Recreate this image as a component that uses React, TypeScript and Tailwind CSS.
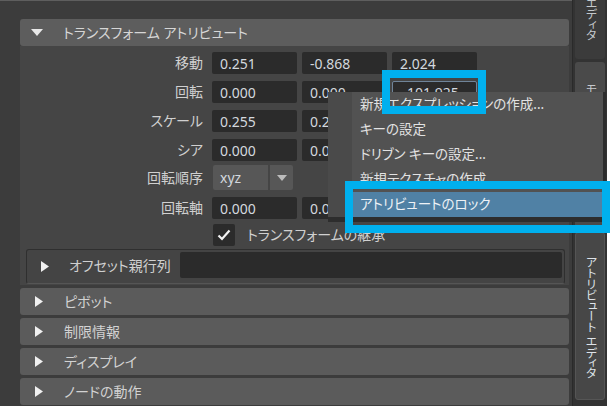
import React from "react";

function TriDown({ color = "#e8e8e8", w = 12, h = 7 }: { color?: string; w?: number; h?: number }) {
  return (
    <svg width={w} height={h} viewBox={`0 0 ${w} ${h}`} className="shrink-0">
      <polygon points={`0,0 ${w},0 ${w / 2},${h}`} fill={color} />
    </svg>
  );
}

function TriRight({ color = "#f0f0f0", w = 8, h = 11 }: { color?: string; w?: number; h?: number }) {
  return (
    <svg width={w} height={h} viewBox={`0 0 ${w} ${h}`} className="shrink-0">
      <polygon points={`0,0 ${w},${h / 2} 0,${h}`} fill={color} />
    </svg>
  );
}

function Field({ value, focus = false }: { value: string; focus?: boolean }) {
  return (
    <div
      className={
        focus
          ? "w-[85px] h-[22px] rounded-[2px] bg-[#2b2b2b] border border-[#6f8499] flex items-center pl-[14px] text-[14px] text-[#d3d8de]"
          : "w-[85px] h-[22px] rounded-[2px] bg-[#2b2b2b] flex items-center pl-[8px] text-[14px] text-[#d3d8de]"
      }
    >
      {value}
    </div>
  );
}

function Row({ label, values, mt, focusIdx = -1 }: { label: string; values: string[]; mt: string; focusIdx?: number }) {
  return (
    <div className={`flex items-center h-[22px] ${mt}`}>
      <div className="w-[183px] text-right text-[14px] text-[#d0d0d0] leading-none">{label}</div>
      <div className="flex gap-[5px] ml-[9px]">
        {values.map((v, i) => (
          <Field key={i} value={v} focus={i === focusIdx} />
        ))}
      </div>
    </div>
  );
}

function Collapsed({ label }: { label: string }) {
  return (
    <div className="h-[27px] mt-[3px] shrink-0 rounded-[3px] bg-[#5b5b5b] flex items-center pl-[15px]">
      <TriRight />
      <span className="ml-[21px] text-[14px] text-[#d2d2d2] leading-none">{label}</span>
    </div>
  );
}

export default function App() {
  return (
    <div className="relative w-[615px] h-[406px] overflow-hidden bg-white font-['Noto_Sans','Noto_Sans_CJK_JP',sans-serif] [font-feature-settings:'palt']">
      <div className="flex h-full">
        {/* main panel */}
        <div className="w-[572px] h-full bg-[#3c3c3c] border-t border-[#5e5e5e] pl-[20px] pr-[3px] pt-[18px] flex flex-col">
          <div className="h-[27px] shrink-0 rounded-[3px] bg-[#5d5d5d] flex items-center pl-[11px]">
            <TriDown />
            <span className="ml-[20px] text-[14px] text-[#d6d6d6] leading-none">トランスフォーム アトリビュート</span>
          </div>
          <div className="bg-[#454545] pt-[6px] pb-[1px] flex flex-col">
            <Row label="移動" values={["0.251", "-0.868", "2.024"]} mt="" />
            <Row label="回転" values={["0.000", "0.000", "101.925"]} mt="mt-[7px]" focusIdx={2} />
            <Row label="スケール" values={["0.255", "0.255", "0.255"]} mt="mt-[7px]" />
            <Row label="シア" values={["0.000", "0.000", "0.000"]} mt="mt-[7px]" />
            <div className="flex items-center h-[25px] mt-[4px]">
              <div className="w-[183px] text-right text-[14px] text-[#d0d0d0] leading-none">回転順序</div>
              <div className="flex ml-[10px] gap-[2px]">
                <div className="w-[55px] h-[25px] rounded-l-[2px] bg-[#575757] flex items-center pl-[7px] text-[14px] text-[#d3d8de]">xyz</div>
                <div className="w-[23px] h-[25px] rounded-r-[2px] bg-[#575757] flex items-center justify-center">
                  <TriDown color="#bcbcbc" w={10} h={6} />
                </div>
              </div>
            </div>
            <Row label="回転軸" values={["0.000", "0.000", "0.000"]} mt="mt-[7px]" />
            <div className="flex items-center h-[22px] mt-[5px]">
              <div className="w-[22px] h-[22px] ml-[193px] rounded-[2px] bg-[#2b2b2b] flex items-center justify-center">
                <svg width="14" height="12" viewBox="0 0 14 12">
                  <polyline points="1.5,6.5 5,10 12.5,1.5" fill="none" stroke="#f2f2f2" strokeWidth="2.2" />
                </svg>
              </div>
              <span className="ml-[12px] text-[14px] text-[#d0d0d0] leading-none">トランスフォームの継承</span>
            </div>
            <div className="mt-[3px] ml-[6px] mr-[4px] h-[35px] rounded-[3px] border border-[#2f2f2f] border-b-[#555555] bg-[#444444] flex items-start">
              <div className="h-[32px] flex items-center pl-[14px]">
                <TriRight />
                <span className="ml-[20px] text-[14px] text-[#d0d0d0] leading-none">オフセット親行列</span>
              </div>
              <div className="flex-1 h-[26px] mt-[2px] ml-[9px] mr-[2px] rounded-[2px] bg-[#2b2b2b]" />
            </div>
          </div>
          <Collapsed label="ピボット" />
          <Collapsed label="制限情報" />
          <Collapsed label="ディスプレイ" />
          <Collapsed label="ノードの動作" />
        </div>

        {/* right tab strip */}
        <div className="w-[35px] h-full bg-[#333333] border-l border-[#2a2a2a] flex flex-col px-[2px]">
          <div className="h-[59px] shrink-0 rounded-b-[3px] bg-[#3b3b3b] overflow-hidden flex flex-col justify-end items-center pb-[18px]">
            <span className="[writing-mode:vertical-rl] [font-feature-settings:'vpal'] text-[12px] text-[#c4c8cc] leading-none whitespace-nowrap">チャンネル ボックス/レイヤ エディタ</span>
          </div>
          <div className="h-[167px] mt-[3px] shrink-0 rounded-[3px] bg-[#4a4a4a] overflow-hidden flex flex-col items-center pt-[22px]">
            <span className="[writing-mode:vertical-rl] [font-feature-settings:'vpal'] text-[12px] text-[#c4c8cc] leading-none whitespace-nowrap">モデリング ツールキット</span>
          </div>
          <div className="h-[168px] mt-[3px] shrink-0 rounded-[3px] bg-[#474747] border border-[#555555] overflow-hidden flex flex-col items-center pt-[23px]">
            <span className="[writing-mode:vertical-rl] [font-feature-settings:'vpal'] text-[12px] text-[#dde2e8] leading-none whitespace-nowrap">アトリビュート エディタ</span>
          </div>
        </div>
        <div className="w-[8px] h-full bg-white" />
      </div>

      {/* context menu */}
      <div className="absolute left-[328px] top-[92px] w-[278px] border-r-[3px] border-b-[5px] border-[#2d2d2d] flex">
        <div className="w-[24px] bg-[#4a4a4a]" />
        <div className="flex-1 bg-[#525252] flex flex-col text-[13.5px] text-[#e2e2e2]">
          <div className="h-[25px] flex items-center pl-[8px]">新規エクスプレッションの作成...</div>
          <div className="h-[25px] flex items-center pl-[8px]">キーの設定</div>
          <div className="h-[25px] flex items-center pl-[8px]">ドリブン キーの設定...</div>
          <div className="h-[25px] flex items-center pl-[8px]">新規テクスチャの作成</div>
          <div className="h-[25px] flex items-center pl-[8px] bg-[#5081a5] text-[#eef2f6]">アトリビュートのロック</div>
        </div>
      </div>

      {/* annotation boxes */}
      <div className="absolute left-[382px] top-[70px] w-[104px] h-[44px] border-[8px] border-[#00b0ee]" />
      <div className="absolute left-[345px] top-[181px] w-[265px] h-[52px] border-[8px] border-[#00b0ee]" />
    </div>
  );
}
